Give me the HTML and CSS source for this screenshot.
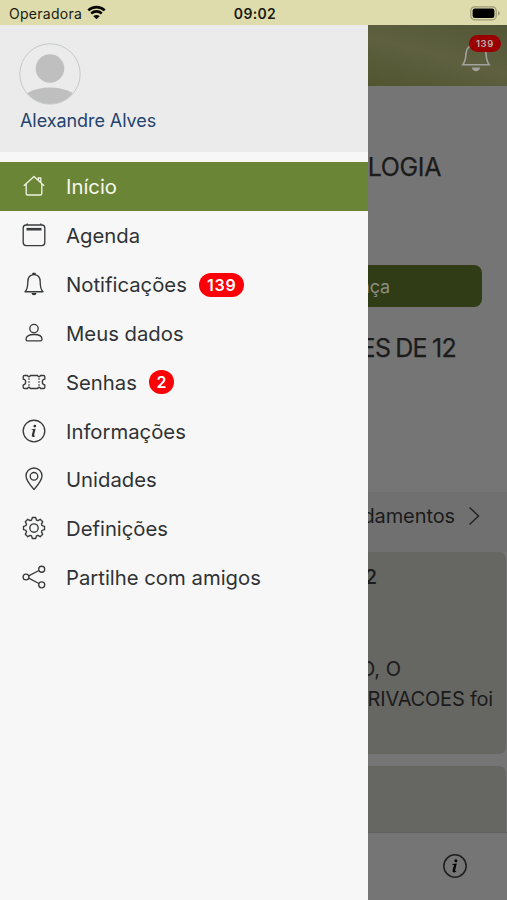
FILE: index.html
```html
<!DOCTYPE html>
<html lang="pt">
<head>
<meta charset="utf-8">
<title>Menu</title>
<link rel="stylesheet" href="styles.css">
</head>
<body>
<header class="status">
  <div class="carrier"><span>Operadora</span>
    <svg width="19" height="15" viewBox="0 0 19 15"><path d="M1.3 5.4a11.8 11.8 0 0 1 16.4 0M4.2 8.5a7.7 7.7 0 0 1 10.6 0" fill="none" stroke="#080804" stroke-width="2.6"/><path d="M9.5 14.3 6.3 11.2a4.6 4.6 0 0 1 6.4 0Z" fill="#080804"/></svg>
  </div>
  <time class="clock">09:02</time>
  <svg class="battery" width="31" height="15" viewBox="0 0 31 15"><rect x=".8" y=".8" width="25.4" height="13" rx="3.8" fill="none" stroke="#9a9973" stroke-width="1.2"/><rect x="2.6" y="2.6" width="21.8" height="9.4" rx="2.2" fill="#000"/><path d="M28 5v4.600q1.700-.6 1.700-2.300T28 5Z" fill="#9a9973"/></svg>
</header>
<div class="screen">
  <aside class="drawer">
    <section class="profile">
      <svg width="62" height="62" viewBox="0 0 62 62"><defs><clipPath id="face"><circle cx="31" cy="31" r="30"/></clipPath></defs><circle cx="31" cy="31" r="30" fill="#ebebeb"/><g clip-path="url(#face)" fill="#bfbfbf"><circle cx="31" cy="25.500" r="14.300"/><ellipse cx="31" cy="61" rx="30" ry="16.500"/></g><circle cx="31" cy="31" r="30.200" fill="none" stroke="#c5c9cb"/></svg>
      <div class="name">Alexandre Alves</div>
    </section>
    <nav class="menu">
      <a class="item active"><svg viewBox="0 0 24 24"><path d="M1.800 11.800 12 2.500l10.200 9.300M4.200 10v9.500q0 1.500 1.500 1.500h12.600q1.500 0 1.500-1.500V10M16.300 4v2.300l2.500 2.200V4Z"/></svg><span>Início</span></a>
      <a class="item"><svg viewBox="0 0 24 24"><rect x="1.200" y="2" width="21.600" height="20.600" rx="3"/><path d="M5.200 2V.5M18.800 2V.5"/><path class="thick" d="M4.500 6.200h15"/></svg><span>Agenda</span></a>
      <a class="item"><svg viewBox="0 0 24 24"><path d="M3 19.700c2.200-2 2.800-5 2.800-9.700C5.800 5.300 8 2.600 12 2.600s6.200 2.700 6.200 7.400c0 4.700.6 7.700 2.800 9.700ZM10.800 2.600v-1q1.200-.8 2.400 0v1"/><path class="solid" d="M9.500 21h5c-.3 3-4.700 3-5 0Z"/></svg><span>Notificações</span><b class="badge">139</b></a>
      <a class="item"><svg viewBox="0 0 24 24"><circle cx="12" cy="7.600" r="4.200"/><path d="M4 18.200c0-3.300 3.600-4.700 8-4.700s8 1.400 8 4.700c0 1-.5 1.700-1.500 1.700h-13c-1 0-1.500-.7-1.500-1.700Z"/></svg><span>Meus dados</span></a>
      <a class="item"><svg viewBox="0 0 24 24"><path d="M2.500 5.500h3.200c.1 1.700 2.300 1.700 2.500 0h7.600c.2 1.700 2.400 1.700 2.500 0h3.200q1.300 0 1.300 1.300v2.400c-3.300.2-3.300 5.400 0 5.600v2.400q0 1.300-1.300 1.300h-3.200c-.1-1.700-2.300-1.700-2.500 0H8.200c-.2-1.700-2.400-1.700-2.500 0H2.500q-1.300 0-1.300-1.300v-2.400c3.300-.2 3.300-5.400 0-5.600V6.800q0-1.300 1.300-1.300Z"/><path class="dash" d="M7 8v8M17 8v8"/></svg><span>Senhas</span><b class="badge round">2</b></a>
      <a class="item"><svg viewBox="0 0 24 24"><circle cx="12" cy="12" r="10.800"/><circle class="solid" cx="12.800" cy="7.100" r="1.400"/><path class="solid" d="m9.700 10.200 3.900-.5-1.600 6.600q-.1.700 1.500.1-.8 1.500-2.400 1.500-1.700 0-1.300-1.700l1.300-5.100-1.500-.2Z"/></svg><span>Informações</span></a>
      <a class="item"><svg viewBox="0 0 24 24"><path d="M12 22.500C8.500 18.500 4 13.200 4 9a8 8 0 0 1 16 0c0 4.200-4.500 9.500-8 13.500Z"/><circle cx="12" cy="9.300" r="3.800"/></svg><span>Unidades</span></a>
      <a class="item"><svg viewBox="0 0 24 24"><path d="M10.300 1.500h3.400l.7 2.500 1.500.6 2.300-1.300 2.500 2.500-1.300 2.300.6 1.500 2.500.7v3.400l-2.500.7-.6 1.500 1.300 2.300-2.500 2.500-2.300-1.300-1.500.6-.7 2.500h-3.400L9.600 20l-1.500-.6-2.300 1.300-2.500-2.500 1.300-2.300-.6-1.500-2.500-.7v-3.400L4 9.600l.6-1.500-1.300-2.300 2.500-2.500 2.300 1.300L9.600 4Z"/><circle cx="12" cy="12" r="4.200"/></svg><span>Definições</span></a>
      <a class="item"><svg viewBox="0 0 24 24"><circle cx="4" cy="12" r="2.900"/><circle cx="19.700" cy="4.200" r="3"/><circle cx="19.700" cy="19.800" r="3"/><path d="m6.700 10.800 10.200-5.300M6.700 13.200l10.200 5.300"/></svg><span>Partilhe com amigos</span></a>
    </nav>
  </aside>
  <main class="page">
    <div class="topbar">
      <div class="alerts">
        <svg width="30" height="30" viewBox="0 0 30 30"><path d="M1.800 21.800C4.800 18 4.800 15 5 10 5.500 4.500 9 2 15 2s9.500 2.500 10 8c.2 5 .2 8 3.200 11.800Z" fill="none" stroke="#a2a3a0" stroke-width="1.600"/><path d="M11 24.500h8c-.5 5-7.500 5-8 0Z" fill="#a2a3a0"/></svg>
        <b class="count">139</b>
      </div>
    </div>
    <section class="summary">
      <div class="title first">LOGIA</div>
      <div class="button"><span>nça</span></div>
      <div class="title second">ES DE 12</div>
    </section>
    <div class="more"><span>damentos</span><svg width="12" height="20" viewBox="0 0 12 20"><path d="m1.500 1.500 9 8.500-9 8.500" fill="none" stroke="#242424" stroke-width="1.500"/></svg></div>
    <article class="card">
      <div class="number">2</div>
      <div class="line one">O, O</div>
      <div class="line two">RIVACOES foi</div>
    </article>
    <article class="card next"></article>
    <footer class="tabs"><svg width="26" height="26" viewBox="0 0 24 24"><circle cx="12" cy="12" r="10.300" fill="none" stroke="#202020" stroke-width="1.400"/><circle cx="12.800" cy="7.100" r="1.400"/><path d="m9.700 10.200 3.900-.5-1.600 6.600q-.1.700 1.500.1-.8 1.500-2.400 1.500-1.700 0-1.300-1.700l1.300-5.100-1.500-.2Z"/></svg></footer>
  </main>
</div>
</body>
</html>
```
FILE: styles.css
```css
* { box-sizing: border-box; }
body { margin: 0; width: 507px; height: 900px; overflow: hidden; font-family: Inter, "Liberation Sans", sans-serif; color: #303234; }
svg { display: block; flex: none; }
.status { height: 25px; padding: 0 6px 0 9px; background: #dedcac; display: grid; grid-template-columns: 1fr auto 1fr; align-items: center; color: #1b1b12; }
.carrier { display: flex; align-items: center; gap: 5px; font-size: 14px; padding-top: 2px; letter-spacing: .28px; }
.carrier svg { margin-top: -3px; }
.clock { font-size: 14px; font-weight: 600; padding-top: 2px; letter-spacing: .35px; }
.battery { justify-self: end; margin-top: 2px; }
.screen { display: flex; height: 875px; }
.drawer { width: 368px; flex: none; background: #f7f7f7; }
.profile { height: 127px; padding: 18px 19px 0; background: #ebebeb; }
.name { margin: 4px 0 0 1px; font-size: 18px; line-height: 24px; letter-spacing: -.07px; color: #24446f; white-space: nowrap; }
.menu { padding-top: 10px; }
.item { height: 48.85px; padding-left: 22px; display: flex; align-items: center; font-size: 20.300px; white-space: nowrap; }
.item span { padding-top: 1px; }
.item svg { width: 24px; height: 24px; margin-right: 20px; fill: none; stroke: #393b3c; stroke-width: 1.350; stroke-linejoin: round; }
.item .solid { fill: #303234; stroke: none; }
.item .thick { stroke-width: 2.600; }
.item .dash { stroke-width: 1; stroke-dasharray: 2 1; }
.active { background: #6b8537; color: #f7f8ef; }
.active svg { stroke: #eef2df; }
.badge { margin: 1px 0 0 12px; width: 45px; height: 24px; border-radius: 12px; background: #fb0007; color: #fff; font-size: 16px; font-weight: 600; letter-spacing: .8px; text-indent: .8px; line-height: 24px; text-align: center; }
.badge.round { width: 25px; letter-spacing: 0; text-indent: 0; }
.page { width: 139px; overflow: hidden; background: #757575; color: #1b1b1b; display: flex; flex-direction: column; }
.page > * { flex: none; }
.topbar { height: 61px; background: linear-gradient(15deg, #50552f, #5e6040 50%, #535736); display: flex; justify-content: flex-end; padding: 10px 6px 0 0; }
.alerts { position: relative; width: 40px; height: 40px; }
.alerts svg { margin: 8px 0 0 0; }
.count { position: absolute; top: 0; right: 0; width: 32px; height: 17px; border-radius: 9px; background: #9a0003; color: #bbb0b0; font-size: 9.500px; line-height: 17px; font-weight: 600; text-align: center; letter-spacing: .7px; }
.summary { height: 406px; padding-top: 63px; }
.title, .more, .number, .line { display: flex; justify-content: flex-end; white-space: nowrap; }
.title { height: 36px; align-items: center; font-size: 25px; padding-right: 66px; letter-spacing: -.4px; -webkit-text-stroke: .25px; }
.button { margin: 80px 25px 0 0; height: 42px; border-radius: 0 8px 8px 0; background: #303c16; color: #8b8e83; font-size: 18px; letter-spacing: -.15px; display: flex; align-items: center; justify-content: flex-end; padding-right: 92px; }
.title.second { margin-top: 23px; padding-right: 51px; letter-spacing: -.65px; word-spacing: -1.5px; }
.more { height: 60px; padding: 0 27px 12px 0; align-items: center; gap: 13px; background: #707070; font-size: 20px; letter-spacing: -.1px; }
.card { height: 202px; background: #666663; border-radius: 0 7px 7px 0; margin-right: 1px; }
.number { padding: 10px 129px 0 0; font-size: 20px; line-height: 30px; font-weight: 500; }
.line { font-size: 20px; line-height: 30px; }
.line.one { margin-top: 62px; padding-right: 105px; }
.line.two { padding-right: 13px; letter-spacing: -.2px; }
.card.next { height: 66px; margin-top: 12px; border-radius: 0 7px 0 0; }
.tabs { flex: 1; border-top: 1px solid #606060; display: flex; justify-content: flex-end; padding: 20px 39px 0 0; }
```
